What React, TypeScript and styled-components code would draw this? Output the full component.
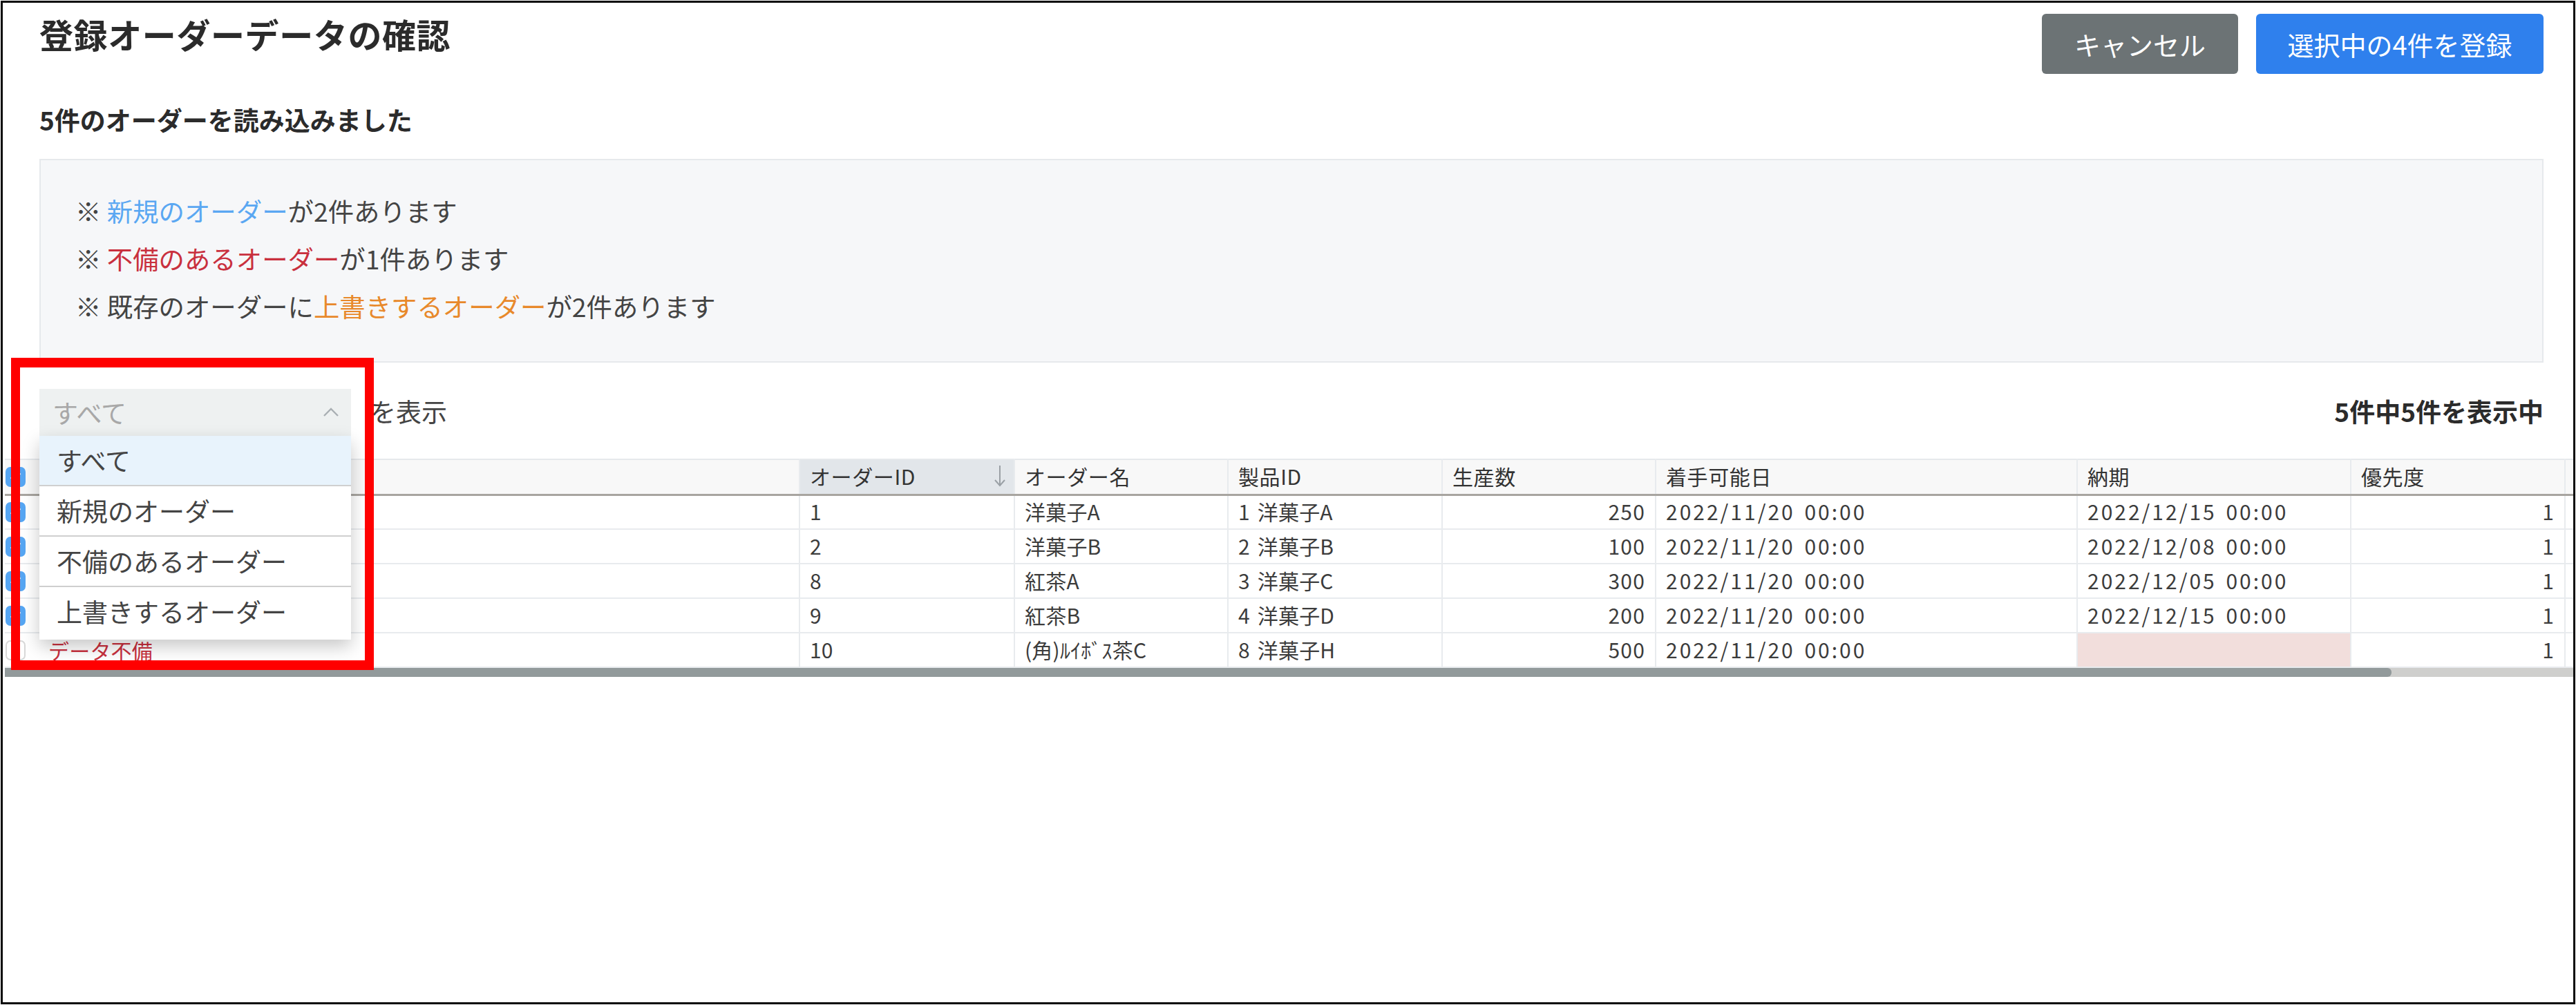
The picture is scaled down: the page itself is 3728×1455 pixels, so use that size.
import React from "react";
import styled, { createGlobalStyle } from "styled-components";

const FONT = `"Noto Sans CJK JP", "Noto Sans", sans-serif`;

const rows = [
  { check: true, note: "", id: "1", name: "洋菓子A", product: "1 洋菓子A", qty: "250", due: "2022/12/15 00:00" },
  { check: true, note: "", id: "2", name: "洋菓子B", product: "2 洋菓子B", qty: "100", due: "2022/12/08 00:00" },
  { check: true, note: "", id: "8", name: "紅茶A", product: "3 洋菓子C", qty: "300", due: "2022/12/05 00:00" },
  { check: true, note: "", id: "9", name: "紅茶B", product: "4 洋菓子D", qty: "200", due: "2022/12/15 00:00" },
  { check: false, note: "データ不備", id: "10", name: "(角)ﾙｲﾎﾞｽ茶C", product: "8 洋菓子H", qty: "500", due: "" },
];

const options = ["すべて", "新規のオーダー", "不備のあるオーダー", "上書きするオーダー"];

const CheckBox: React.FC<{ on: boolean }> = ({ on }) => (
  <Check $on={on}>
    {on && (
      <svg width="17" height="17" viewBox="0 0 17 17" fill="none" stroke="#fff" strokeWidth="3">
        <path d="M2 9 L7 14 L15 3" />
      </svg>
    )}
  </Check>
);

const App: React.FC = () => {
  return (
    <>
      <GlobalStyle />
      <Frame>
        <Top>
          <Head>
            <Title>登録オーダーデータの確認</Title>
            <Actions>
              <Button $tone="#6c7375" $width={284}>
                キャンセル
              </Button>
              <Button $tone="#2f80ed" $width={416}>
                選択中の4件を登録
              </Button>
            </Actions>
          </Head>
          <Lead>5件のオーダーを読み込みました</Lead>
          <InfoBox>
            <InfoLine>
              ※ <Mark $color="#5aa7f2">新規のオーダー</Mark>が2件あります
            </InfoLine>
            <InfoLine>
              ※ <Mark $color="#c9303e">不備のあるオーダー</Mark>が1件あります
            </InfoLine>
            <InfoLine>
              ※ 既存のオーダーに<Mark $color="#e8892b">上書きするオーダー</Mark>が2件あります
            </InfoLine>
          </InfoBox>
          <Toolbar>
            <FilterGroup>
              <Select>
                <SelectValue>すべて</SelectValue>
                <svg width="24" height="14" viewBox="0 0 24 14" fill="none" stroke="#a9afb3" strokeWidth="2.4">
                  <path d="M2 12 L12 2 L22 12" />
                </svg>
                <Menu>
                  {options.map((o, i) => (
                    <Option key={o} $active={i === 0}>
                      {o}
                    </Option>
                  ))}
                </Menu>
              </Select>
              <FilterLabel>を表示</FilterLabel>
            </FilterGroup>
            <Count>5件中5件を表示中</Count>
          </Toolbar>
        </Top>

        <Grid>
          <colgroup>
            <col style={{ width: 1150 }} />
            <col style={{ width: 311 }} />
            <col style={{ width: 309 }} />
            <col style={{ width: 310 }} />
            <col style={{ width: 309 }} />
            <col style={{ width: 610 }} />
            <col style={{ width: 396 }} />
            <col style={{ width: 310 }} />
            <col />
          </colgroup>
          <thead>
            <tr>
              <Th>
                <CheckBox on />
              </Th>
              <Th $sorted>
                <SortHead>
                  オーダーID
                  <svg width="18" height="34" viewBox="0 0 18 34" fill="none" stroke="#9aa0a5" strokeWidth="2">
                    <path d="M9 2 V31 M2 23 L9 31 L16 23" />
                  </svg>
                </SortHead>
              </Th>
              <Th>オーダー名</Th>
              <Th>製品ID</Th>
              <Th>生産数</Th>
              <Th>着手可能日</Th>
              <Th>納期</Th>
              <Th>優先度</Th>
              <Th />
            </tr>
          </thead>
          <tbody>
            {rows.map((r) => (
              <tr key={r.id}>
                <Td>
                  <FirstCell>
                    <CheckBox on={r.check} />
                    <Note>{r.note}</Note>
                  </FirstCell>
                </Td>
                <Td>{r.id}</Td>
                <Td>{r.name}</Td>
                <Td>{r.product}</Td>
                <Td $right>{r.qty}</Td>
                <Td $date>2022/11/20 00:00</Td>
                <Td $date $missing={!r.due}>
                  {r.due}
                </Td>
                <Td $right>1</Td>
                <Td />
              </tr>
            ))}
          </tbody>
        </Grid>
        <ScrollTrack>
          <ScrollThumb />
        </ScrollTrack>

        <Callout />
      </Frame>
    </>
  );
};

export default App;

const GlobalStyle = createGlobalStyle`
  html, body {
    margin: 0;
    padding: 0;
    background: #fff;
  }
  body {
    font-family: ${FONT};
    color: #333;
  }
`;

const Frame = styled.div`
  position: relative;
  box-sizing: border-box;
  width: 3726px;
  height: 1453px;
  margin: 1px 0 0 1px;
  border: 3px solid #0a0a0a;
  background: #fff;
`;

const Top = styled.div`
  padding: 16px 43px 0 53px;
`;

const Head = styled.div`
  display: flex;
  justify-content: space-between;
  align-items: flex-start;
`;

const Title = styled.h1`
  margin: 0;
  font-size: 49px;
  line-height: 58px;
  font-weight: 700;
  color: #2b2b2b;
  letter-spacing: 0.6px;
`;

const Actions = styled.div`
  display: flex;
  gap: 26px;
`;

const Button = styled.button<{ $tone: string; $width: number }>`
  width: ${(p) => p.$width}px;
  height: 87px;
  padding: 0;
  border: 0;
  border-radius: 6px;
  background: ${(p) => p.$tone};
  color: #fff;
  font-family: ${FONT};
  font-size: 38px;
`;

const Lead = styled.p`
  margin: 44px 0 0;
  font-size: 37px;
  line-height: 44px;
  font-weight: 700;
  color: #2b2b2b;
`;

const InfoBox = styled.div`
  box-sizing: border-box;
  height: 295px;
  margin-top: 35px;
  padding: 39px 50px;
  border: 2px solid #e6e9ec;
  background: #f6f7f9;
`;

const InfoLine = styled.div`
  font-size: 37.4px;
  line-height: 69px;
  color: #444;
`;

const Mark = styled.span<{ $color: string }>`
  color: ${(p) => p.$color};
`;

const Toolbar = styled.div`
  display: flex;
  justify-content: space-between;
  align-items: center;
  height: 139px;
`;

const FilterGroup = styled.div`
  display: flex;
  align-items: center;
  gap: 28px;
`;

const Select = styled.div`
  position: relative;
  box-sizing: border-box;
  display: flex;
  align-items: center;
  justify-content: space-between;
  width: 451px;
  height: 70px;
  margin-top: 6px;
  padding: 0 17px 0 19px;
  background: #eef1f1;
  border-bottom: 2px solid #c9c9c9;
`;

const SelectValue = styled.span`
  font-size: 37px;
  color: #a8a8a8;
`;

const Menu = styled.div`
  position: absolute;
  top: 100%;
  left: 0;
  width: 100%;
  background: #fff;
  box-shadow: 0 10px 24px rgba(0, 0, 0, 0.22);
  z-index: 2;
`;

const Option = styled.div<{ $active?: boolean }>`
  box-sizing: border-box;
  height: 73px;
  padding-left: 25px;
  font-size: 37px;
  line-height: 70px;
  color: #444;
  background: ${(p) => (p.$active ? "#e8f3fc" : "#fff")};
  border-bottom: 2px solid #cfcfcf;

  &:last-child {
    height: 76px;
    border-bottom: 0;
  }
`;

const FilterLabel = styled.span`
  font-size: 37px;
  color: #444;
`;

const Count = styled.span`
  font-size: 37px;
  font-weight: 700;
  color: #2b2b2b;
`;

const Grid = styled.table`
  table-layout: fixed;
  border-collapse: collapse;
  border-top: 2px solid #e6e9ec;
  margin-left: 3px;
  width: calc(100% - 3px);
`;

const Th = styled.th<{ $sorted?: boolean }>`
  box-sizing: border-box;
  height: 51px;
  padding: 0 14px 2px;
  background: ${(p) => (p.$sorted ? "#e2e6ea" : "#f8f8f8")};
  border-left: 2px solid #e8ebee;
  border-bottom: 3px solid #a8a5a0;
  font-size: 30px;
  letter-spacing: 0.6px;
  font-weight: 400;
  color: #333;
  text-align: left;

  &:first-child {
    border-left: 0;
    padding: 0 0 0 1px;
  }
`;

const SortHead = styled.div`
  display: flex;
  align-items: center;
  justify-content: space-between;
  margin-right: -3px;
`;

const Td = styled.td<{ $right?: boolean; $missing?: boolean; $date?: boolean }>`
  box-sizing: border-box;
  height: 50px;
  padding: 0 14px 3px;
  background: ${(p) => (p.$missing ? "#f2dedc" : "#fff")};
  border-left: 2px solid #e8ebee;
  border-bottom: 2px solid #e8ebee;
  font-size: 30px;
  letter-spacing: ${(p) => (p.$date ? "3px" : p.$right ? "1.2px" : "0.2px")};
  word-spacing: 4px;
  color: #3c3c3c;
  text-align: ${(p) => (p.$right ? "right" : "left")};
  white-space: nowrap;

  &:first-child {
    border-left: 0;
    padding: 0 0 0 1px;
  }
`;

const FirstCell = styled.div`
  display: flex;
  align-items: center;
  gap: 33px;
`;

const Note = styled.span`
  color: #c9303e;
`;

const Check = styled.span<{ $on?: boolean }>`
  display: flex;
  align-items: center;
  justify-content: center;
  box-sizing: border-box;
  width: 29px;
  height: 29px;
  border-radius: 7px;
  background: ${(p) => (p.$on ? "#56a6f3" : "#fff")};
  border: 2px solid ${(p) => (p.$on ? "#56a6f3" : "#d8d8d8")};
`;

const ScrollTrack = styled.div`
  height: 13px;
  margin-left: 3px;
  background: #cfcfcd;
`;

const ScrollThumb = styled.div`
  width: 3454px;
  height: 100%;
  background: #929a9b;
  border-radius: 0 6px 6px 0;
`;

const Callout = styled.div`
  position: absolute;
  left: 12px;
  top: 514px;
  width: 525px;
  height: 452px;
  box-sizing: border-box;
  border: 14px solid #ff0000;
  border-left-width: 13px;
  border-right-width: 13px;
  z-index: 3;
  pointer-events: none;
`;
